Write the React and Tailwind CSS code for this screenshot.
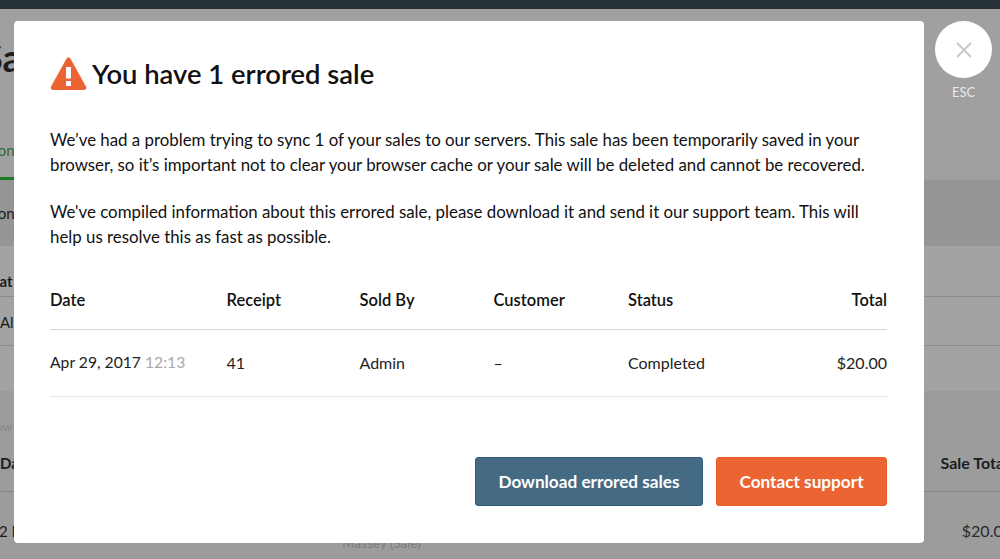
import React from "react";

const columns = "grid grid-cols-[176.5px_133px_134px_134.5px_1fr]";

const Backdrop = () => {
  return (
    <div className="h-[559px] overflow-hidden bg-[#a0a0a0] text-[#1c1c1c]">
      {/* Top bar */}
      <div className="h-[9px] bg-[#263238]" />

      {/* Page title and tabs */}
      <section className="h-[171px] pt-[24px]">
        <h1 className="-ml-[18px] text-[38px] leading-[48px] font-bold">Sales</h1>
        <div className="-ml-[16px] mt-[58px] text-[15px] leading-[22px] text-[#2e6b2e]">Mon</div>
        <div className="mt-[16px] h-[3px] w-[14px] bg-[#1f7a22]" />
      </section>

      {/* Filter band */}
      <section className="h-[66px] bg-[#959595] pt-[22px]">
        <div className="-ml-[16px] text-[15px] leading-[22px]">Mon</div>
      </section>

      {/* Upper table */}
      <section className="h-[145px] bg-[#a3a3a3]">
        <div className="h-[51px] border-b border-[#8c8c8c] pt-[24px]">
          <div className="-ml-[14px] text-[15px] leading-[22px] font-bold">Stat</div>
        </div>
        <div className="h-[49px] border-b border-[#8c8c8c] pt-[14px]">
          <div className="text-[15px] leading-[22px]">All</div>
        </div>
      </section>

      {/* Lower table */}
      <section className="h-[168px] bg-[#9c9c9c] pt-[28px]">
        <div className="-ml-[17px] text-[12px] leading-[16px] text-[#858585]">Show</div>
        <div className="mt-[16px] flex h-[41px] justify-between border-b border-[#858585] pt-[1px] text-[15px] leading-[22px] font-bold">
          <span>Date</span>
          <span className="-mr-[8px] text-[16px]">Sale Total</span>
        </div>
        <div className="relative flex justify-between pt-[28px] text-[15px] leading-[22px]">
          <span className="-ml-[1px]">2 May</span>
          <span className="-mr-[12px] text-[16px] text-[#2a2a2a]">$20.00</span>
        </div>
        <div className="ml-[342px] -mt-[8px] text-[13.5px] leading-[18px] text-[#7d7d7d]">Massey (Sale)</div>
      </section>
    </div>
  );
};

const WarningIcon = () => {
  return (
    <svg width="37" height="35" viewBox="0 0 37 35" className="shrink-0">
      <path
        d="M18.5 1.5 C19.4 1.5 20.1 2 20.6 2.8 L35.9 30.6 C36.8 32.3 35.9 34 34 34 L3 34 C1.1 34 0.2 32.3 1.1 30.6 L16.4 2.8 C16.9 2 17.6 1.5 18.5 1.5 Z"
        fill="#ec6432"
      />
      <rect x="16" y="11" width="5" height="11.5" fill="#ffffff" />
      <rect x="16" y="25" width="5" height="5" fill="#ffffff" />
    </svg>
  );
};

const ErrorModal = () => {
  return (
    <div className="absolute top-[21px] left-[14px] flex h-[522px] w-[910px] flex-col rounded-[4px] bg-white pt-[34px] pr-[37px] pl-[36px] text-[#111111]">
      <div className="flex h-[37px] items-center gap-[5px]">
        <WarningIcon />
        <h2 className="text-[27.4px] leading-[36px] font-semibold">You have 1 errored sale</h2>
      </div>

      <p className="mt-[35px] text-[16.85px] leading-[25px]">
        We’ve had a problem trying to sync 1 of your sales to our servers. This sale has been temporarily saved in your
        browser, so it’s important not to clear your browser cache or your sale will be deleted and cannot be recovered.
      </p>
      <p className="mt-[22px] text-[16.85px] leading-[25px]">
        We've compiled information about this errored sale, please download it and send it our support team. This will
        help us resolve this as fast as possible.
      </p>

      {/* Errored sale table */}
      <div className={`${columns} mt-[39px] h-[42px] border-b border-[#d6d6d6] text-[16.5px] leading-[25px] font-semibold`}>
        <span>Date</span>
        <span>Receipt</span>
        <span>Sold By</span>
        <span>Customer</span>
        <div className="flex justify-between">
          <span>Status</span>
          <span>Total</span>
        </div>
      </div>
      <div className={`${columns} h-[67px] items-center border-b border-[#e6e6e6] pb-[2px] text-[16px] leading-[25px] text-[#222222]`}>
        <span className="whitespace-nowrap text-[15.7px]">
          Apr 29, 2017 <span className="text-[#a8a8a8]">12:13</span>
        </span>
        <span>41</span>
        <span>Admin</span>
        <span>–</span>
        <div className="flex justify-between">
          <span>Completed</span>
          <span>$20.00</span>
        </div>
      </div>

      <div className="mt-[60px] flex justify-end gap-[13px]">
        <button className="h-[49px] w-[228px] rounded-[3px] border border-[#2f5f7c] bg-[#446a84] text-[17.2px] font-bold text-white">
          Download errored sales
        </button>
        <button className="h-[49px] w-[171px] rounded-[3px] border border-[#ea5a26] bg-[#ec6432] text-[17.2px] font-bold text-white">
          Contact support
        </button>
      </div>
    </div>
  );
};

const CloseButton = () => {
  return (
    <div className="absolute top-[21px] left-[935px] flex w-[57px] flex-col items-center">
      <button className="flex h-[57px] w-[57px] items-center justify-center rounded-full bg-white">
        <svg width="16" height="16" viewBox="0 0 16 16" stroke="#c9c9c9" strokeWidth="2" fill="none">
          <path d="M1 1 L15 15 M15 1 L1 15" />
        </svg>
      </button>
      <span className="mt-[6px] text-[13px] leading-[16px] text-[#e8e8e8]">ESC</span>
    </div>
  );
};

const App = () => {
  return (
    <div className="relative h-[559px] w-[1000px] overflow-hidden font-['Lato',sans-serif]">
      <Backdrop />
      <ErrorModal />
      <CloseButton />
    </div>
  );
};

export default App;
